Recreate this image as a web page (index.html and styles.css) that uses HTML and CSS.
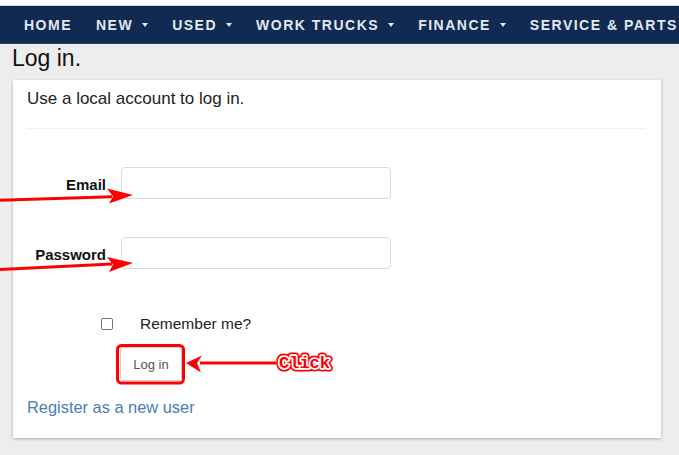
FILE: index.html
```html
<!DOCTYPE html>
<html lang="en">
<head>
<meta charset="utf-8">
<title>Log in</title>
<link rel="stylesheet" href="styles.css">
</head>
<body>
<div class="topbar"></div>
<nav class="navbar">
  <ul class="nav-list">
    <li><a class="nav-link" href="#">HOME</a></li>
    <li><a class="nav-link" href="#">NEW<span class="caret"></span></a></li>
    <li><a class="nav-link" href="#">USED<span class="caret"></span></a></li>
    <li><a class="nav-link" href="#">WORK TRUCKS<span class="caret"></span></a></li>
    <li><a class="nav-link" href="#">FINANCE<span class="caret"></span></a></li>
    <li><a class="nav-link" href="#">SERVICE &amp; PARTS</a></li>
  </ul>
</nav>
<main class="container">
  <h2 class="title">Log in.</h2>
  <section class="card">
    <h4 class="lead">Use a local account to log in.</h4>
    <hr class="divider">
    <form class="form">
      <div class="field">
        <label class="field-label" for="email">Email</label>
        <input class="field-input" id="email" type="email">
      </div>
      <div class="field">
        <label class="field-label" for="pw">Password</label>
        <input class="field-input" id="pw" type="password">
      </div>
      <div class="check-row">
        <input class="check" type="checkbox" id="rem">
        <label class="check-label" for="rem">Remember me?</label>
      </div>
      <div class="btn-row">
        <button class="btn" type="button">Log in</button>
      </div>
    </form>
    <p class="register"><a href="#">Register as a new user</a></p>
  </section>
</main>
<svg class="annot" width="679" height="455" viewBox="0 0 679 455">
  <g fill="#fe0000" stroke="none">
    <path d="M0 198.8 L112 195.2 L112 198.2 L0 201.8 Z"/>
    <polygon points="133,195 107,188.5 113,196.5 109,203.5"/>
    <path d="M0 268 L112 262.5 L112 265.5 L0 271 Z"/>
    <polygon points="133,263 107,257 113,264.5 109,272"/>
    <rect x="200" y="361.5" width="76" height="3"/>
    <polygon points="186,363 202,355.5 197,363 201,372.5"/>
  </g>
  <rect x="117.5" y="345.5" width="66" height="37.5" rx="4" fill="none" stroke="#fe0000" stroke-width="3"/>
  <text class="click-outer" x="279" y="368">Click</text>
  <text class="click-inner" x="279" y="368">Click</text>
</svg>
</body>
</html>
```
FILE: styles.css
```css
* { box-sizing: border-box; }

body {
  margin: 0;
  background: #eeedee;
  font-family: "Liberation Sans", Arial, sans-serif;
  color: #222;
  position: relative;
  height: 455px;
  overflow: hidden;
}

.topbar {
  height: 6px;
  background: #fff;
  border-bottom: 1px solid #d8dde5;
}

.navbar {
  height: 38px;
  background: #102a52;
  display: flex;
  align-items: center;
  padding-left: 24px;
  border-bottom: 1px solid #2c4468;
  white-space: nowrap;
}

.nav-list {
  display: flex;
  gap: 24px;
  list-style: none;
  margin: 0;
  padding: 0;
}

.nav-link {
  display: flex;
  align-items: center;
  color: #e3e8f0;
  font-weight: 700;
  font-size: 14px;
  letter-spacing: 1.5px;
  text-decoration: none;
}

.caret {
  width: 0;
  height: 0;
  border-left: 3.5px solid transparent;
  border-right: 3.5px solid transparent;
  border-top: 4px solid currentColor;
  margin-left: 9px;
}

.container {
  padding-left: 13px;
}

.title {
  margin: 0 0 8px;
  font-size: 23px;
  line-height: 28px;
  font-weight: 400;
  color: #111;
  margin-left: -1px;
}

.card {
  width: 648px;
  background: #fff;
  padding: 9px 14px 21px;
  box-shadow: 0 1px 3px rgba(0, 0, 0, 0.28);
}

.lead {
  margin: 0;
  font-size: 17px;
  line-height: 20px;
  font-weight: 400;
  color: #222;
}

.divider {
  margin: 19px 2px 0 0;
  border: 0;
  border-top: 1px solid #f1f1f1;
  height: 0;
}

.form {
  margin-top: 38px;
}

.field {
  display: grid;
  grid-template-columns: 79px 270px;
  column-gap: 15px;
}

.field + .field {
  margin-top: 38px;
}

.field-label {
  font-size: 15px;
  font-weight: 700;
  line-height: 20px;
  padding-top: 8px;
  text-align: right;
  color: #111;
}

.field-input {
  height: 32px;
  border: 1px solid #dadada;
  border-radius: 4px;
  background: #fff;
  margin: 0;
}

.check-row {
  margin-top: 45px;
  height: 20px;
  display: flex;
  align-items: center;
  padding-left: 74px;
}

.check {
  -webkit-appearance: none;
  appearance: none;
  width: 12px;
  height: 12px;
  margin: 0;
  border: 1.5px solid #767676;
  border-radius: 2px;
  background: #fff;
}

.check-label {
  margin-left: 27px;
  font-size: 15.5px;
  line-height: 20px;
  color: #222;
}

.btn-row {
  margin-top: 13px;
  padding-left: 93px;
}

.btn {
  width: 62px;
  height: 34px;
  font-family: "Liberation Sans", Arial, sans-serif;
  font-size: 13px;
  line-height: 16px;
  padding: 2px 0 0;
  color: #555;
  background: #fff;
  border: 1px solid #cfcfcf;
  border-radius: 3px;
}

.register {
  margin: 16px 0 0;
  font-size: 16.4px;
  line-height: 20px;
}

.register a {
  color: #4b7db6;
  text-decoration: none;
}

.annot {
  position: absolute;
  top: 0;
  left: 0;
  pointer-events: none;
}

.click-outer,
.click-inner {
  font-family: "Liberation Mono", "Courier New", monospace;
  font-weight: 700;
  font-size: 17px;
  stroke-linejoin: round;
  paint-order: stroke;
}

.click-outer {
  fill: #fe0000;
  stroke: #fe0000;
  stroke-width: 7px;
}

.click-inner {
  fill: #fe0000;
  stroke: #fff;
  stroke-width: 3.5px;
}
```
